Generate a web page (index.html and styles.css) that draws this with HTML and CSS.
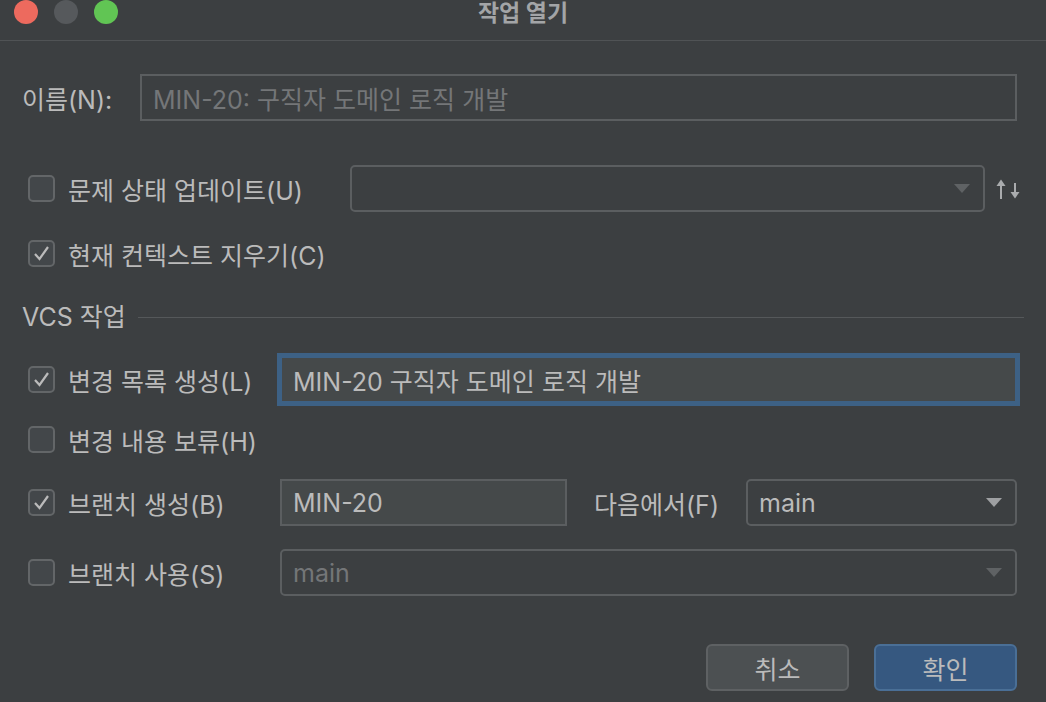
FILE: index.html
```html
<!DOCTYPE html>
<html lang="ko">
<head>
    <meta charset="UTF-8">
    <meta name="viewport" content="width=device-width, initial-scale=1.0">
    <title>작업 열기</title>
    <link rel="stylesheet" href="styles.css">
</head>
<body>
    <div class="window">
        <div class="titlebar">
            <div class="lights">
                <span class="light red"></span>
                <span class="light gray"></span>
                <span class="light green"></span>
            </div>
            <div class="title">작업 열기</div>
            <div></div>
        </div>

        <div class="content">
            <div class="row row-name">
                <span class="field-label">이름(N):</span>
                <div class="input disabled">MIN-20: 구직자 도메인 로직 개발</div>
            </div>

            <div class="row row-status">
                <span class="check wide"><span class="box"></span>문제 상태 업데이트(U)</span>
                <div class="combo disabled"><span></span><span class="arrow"></span></div>
                <svg class="sort-icon" width="24" height="22" viewBox="0 0 24 22">
                    <path d="M5 21V4" stroke="#a9abad" stroke-width="2" fill="none"/>
                    <path d="M0.5 8L5 1.5L9.5 8Z" fill="#a9abad"/>
                    <path d="M19 5V17" stroke="#a9abad" stroke-width="2" fill="none"/>
                    <path d="M14.5 14L19 20.5L23.5 14Z" fill="#a9abad"/>
                </svg>
            </div>

            <div class="row row-clear">
                <span class="check"><span class="box"><svg width="23" height="23" viewBox="0 0 23 23"><path d="M5 12L9.5 17L18 5" stroke="#bbbbbb" stroke-width="2.2" fill="none"/></svg></span>현재 컨텍스트 지우기(C)</span>
            </div>

            <div class="section">
                <span>VCS 작업</span>
                <div class="section-line"></div>
            </div>

            <div class="row row-changelist">
                <span class="check col"><span class="box"><svg width="23" height="23" viewBox="0 0 23 23"><path d="M5 12L9.5 17L18 5" stroke="#bbbbbb" stroke-width="2.2" fill="none"/></svg></span>변경 목록 생성(L)</span>
                <div class="input focused">MIN-20 구직자 도메인 로직 개발</div>
            </div>

            <div class="row row-shelve">
                <span class="check"><span class="box"></span>변경 내용 보류(H)</span>
            </div>

            <div class="row row-branch">
                <span class="check col"><span class="box"><svg width="23" height="23" viewBox="0 0 23 23"><path d="M5 12L9.5 17L18 5" stroke="#bbbbbb" stroke-width="2.2" fill="none"/></svg></span>브랜치 생성(B)</span>
                <div class="input branch-name">MIN-20</div>
                <span class="from-label">다음에서(F)</span>
                <div class="combo"><span>main</span><span class="arrow"></span></div>
            </div>

            <div class="row row-use">
                <span class="check col"><span class="box"></span>브랜치 사용(S)</span>
                <div class="combo disabled"><span>main</span><span class="arrow"></span></div>
            </div>

            <div class="buttons">
                <button class="btn">취소</button>
                <button class="btn primary">확인</button>
            </div>
        </div>
    </div>
</body>
</html>
```

FILE: styles.css
```css
body {
    margin: 0;
    background-color: #3c3f41;
    font-family: Inter, 'Noto Sans CJK KR', sans-serif;
    font-size: 25px;
    color: #bbbbbb;
    overflow: hidden;
}
.window {
    width: 1046px;
    height: 702px;
    background-color: #3c3f41;
}
.titlebar {
    height: 40px;
    border-bottom: 1px solid #505355;
    display: grid;
    grid-template-columns: 1fr auto 1fr;
    align-items: start;
}
.lights {
    display: flex;
    gap: 16px;
    padding-left: 14px;
}
.light {
    width: 24px;
    height: 24px;
    border-radius: 50%;
}
.red { background-color: #ed6a5e; }
.gray { background-color: #56595c; }
.green { background-color: #61c554; }
.title {
    font-weight: bold;
    font-size: 23px;
    line-height: 26px;
    color: #a3a5a7;
}
.content {
    display: flex;
    flex-direction: column;
    padding: 33px 29px 0 22px;
}
.row {
    display: flex;
    align-items: center;
    height: 47px;
}
.row-status { margin-top: 44px; }
.row-clear { margin-top: 18px; }
.row-changelist { margin-top: 29px; }
.row-shelve { margin-top: 13px; }
.row-branch { margin-top: 16px; }
.row-use { margin-top: 23px; }
.field-label {
    width: 118px;
    flex-shrink: 0;
}
.input, .combo {
    box-sizing: border-box;
    height: 47px;
    border: 2px solid #5b5e60;
    display: flex;
    align-items: center;
    padding: 0 13px 0 11px;
    white-space: nowrap;
}
.input {
    flex: 1;
    background-color: #45494a;
}
.input.disabled {
    background-color: #3c3f41;
    color: #747678;
}
.input.focused {
    border-color: #3d6185;
    box-shadow: 0 0 0 3px #3d6185;
}
.branch-name {
    flex: 0 0 287px;
}
.combo {
    flex: 1;
    border-radius: 5px;
    justify-content: space-between;
    background-color: #3c3f41;
}
.combo.disabled {
    color: #747678;
}
.arrow {
    width: 0;
    height: 0;
    border-left: 8px solid transparent;
    border-right: 8px solid transparent;
    border-top: 9px solid #9ea0a2;
}
.combo.disabled .arrow {
    border-top-color: #5f6264;
}
.sort-icon {
    margin-left: 11px;
    margin-right: -3px;
    flex-shrink: 0;
}
.check {
    display: flex;
    align-items: center;
    gap: 13px;
    padding-left: 6px;
    flex-shrink: 0;
    white-space: nowrap;
}
.check.wide {
    box-sizing: border-box;
    width: 328px;
}
.check.col {
    box-sizing: border-box;
    width: 258px;
}
.box {
    box-sizing: border-box;
    width: 27px;
    height: 27px;
    border: 2px solid #636668;
    border-radius: 5px;
    background-color: #43474a;
    display: flex;
    align-items: center;
    justify-content: center;
}
.section {
    margin-top: 30px;
    height: 20px;
    display: flex;
    align-items: center;
    gap: 12px;
    line-height: 20px;
}
.section-line {
    flex: 1;
    height: 1px;
    margin-right: -7px;
    background-color: #55585a;
}
.from-label {
    margin: 0 27px 0 27px;
    white-space: nowrap;
}
.buttons {
    display: flex;
    justify-content: flex-end;
    gap: 25px;
    margin-top: 48px;
}
.btn {
    width: 143px;
    height: 47px;
    border-radius: 6px;
    border: 2px solid #5e6163;
    background-color: #4c5052;
    color: #bbbbbb;
    font-family: inherit;
    font-size: 25px;
}
.btn.primary {
    background-color: #365880;
    border-color: #4a6f96;
}
```
